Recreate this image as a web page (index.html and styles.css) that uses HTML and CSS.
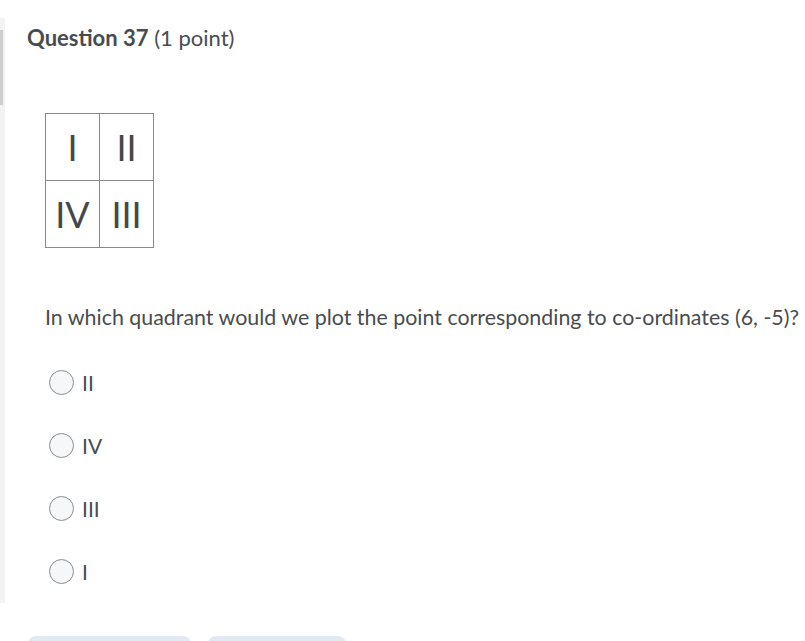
FILE: index.html
```html
<!DOCTYPE html>
<html>
<head>
<meta charset="utf-8">
<link rel="stylesheet" href="styles.css">
</head>
<body>
<div class="page">
  <div class="question">
    <div class="side"><div class="side-mark"></div></div>
    <div class="content">
      <h2 class="title"><strong>Question 37</strong> <span class="pts">(1 point)</span></h2>
      <table class="quad">
        <tr><td>I</td><td>II</td></tr>
        <tr><td>IV</td><td>III</td></tr>
      </table>
      <p class="prompt">In which quadrant would we plot the point corresponding to co-ordinates (6, -5)?</p>
      <ul class="options">
        <li><span class="radio"></span><span class="lbl">II</span></li>
        <li><span class="radio"></span><span class="lbl">IV</span></li>
        <li><span class="radio"></span><span class="lbl">III</span></li>
        <li><span class="radio"></span><span class="lbl">I</span></li>
      </ul>
    </div>
  </div>
  <div class="buttons">
    <div class="btn btn1"></div>
    <div class="btn btn2"></div>
  </div>
</div>
</body>
</html>
```

FILE: styles.css
```css
html, body {
  margin: 0;
  padding: 0;
  background: #ffffff;
  font-family: Lato, "Liberation Sans", sans-serif;
  color: #494c4e;
  overflow: hidden;
}
.page {
  width: 805px;
  height: 641px;
}
.question {
  display: flex;
  padding-top: 18px;
  height: 585px;
}
.side {
  width: 5px;
  background: #f3f3f3;
  padding-top: 12px;
}
.side-mark {
  width: 3px;
  height: 75px;
  background: #cdcdcd;
}
.content {
  padding-left: 22px;
}
.title {
  margin: 6px 0 0 0;
  font-size: 22px;
  font-weight: 400;
  line-height: 28px;
  color: #494c4e;
}
.title strong {
  font-weight: 700;
}
.quad {
  margin: 61px 0 0 18px;
  border-collapse: collapse;
}
.quad td {
  border: 1px solid #888a8c;
  width: 53px;
  height: 66px;
  padding: 0;
  text-align: center;
  font-size: 36px;
  font-weight: 400;
  color: #45484a;
}
.prompt {
  margin: 55px 0 0 18px;
  font-size: 21.4px;
  line-height: 28px;
}
.options {
  list-style: none;
  margin: 20px 0 0 22px;
  padding: 0;
}
.options li {
  display: flex;
  align-items: center;
  height: 63px;
}
.radio {
  width: 25px;
  height: 25px;
  border: 1px solid #8a8c8e;
  border-radius: 50%;
  background: #f6f7f9;
  box-sizing: border-box;
}
.lbl {
  margin-left: 8px;
  font-size: 21px;
}
.buttons {
  display: flex;
  gap: 17px;
  padding-left: 28px;
  margin-top: 33px;
}
.btn {
  height: 20px;
  background: #e3e9f1;
  border-radius: 8px 8px 0 0;
}
.btn1 { width: 163px; }
.btn2 { width: 138px; }
```
